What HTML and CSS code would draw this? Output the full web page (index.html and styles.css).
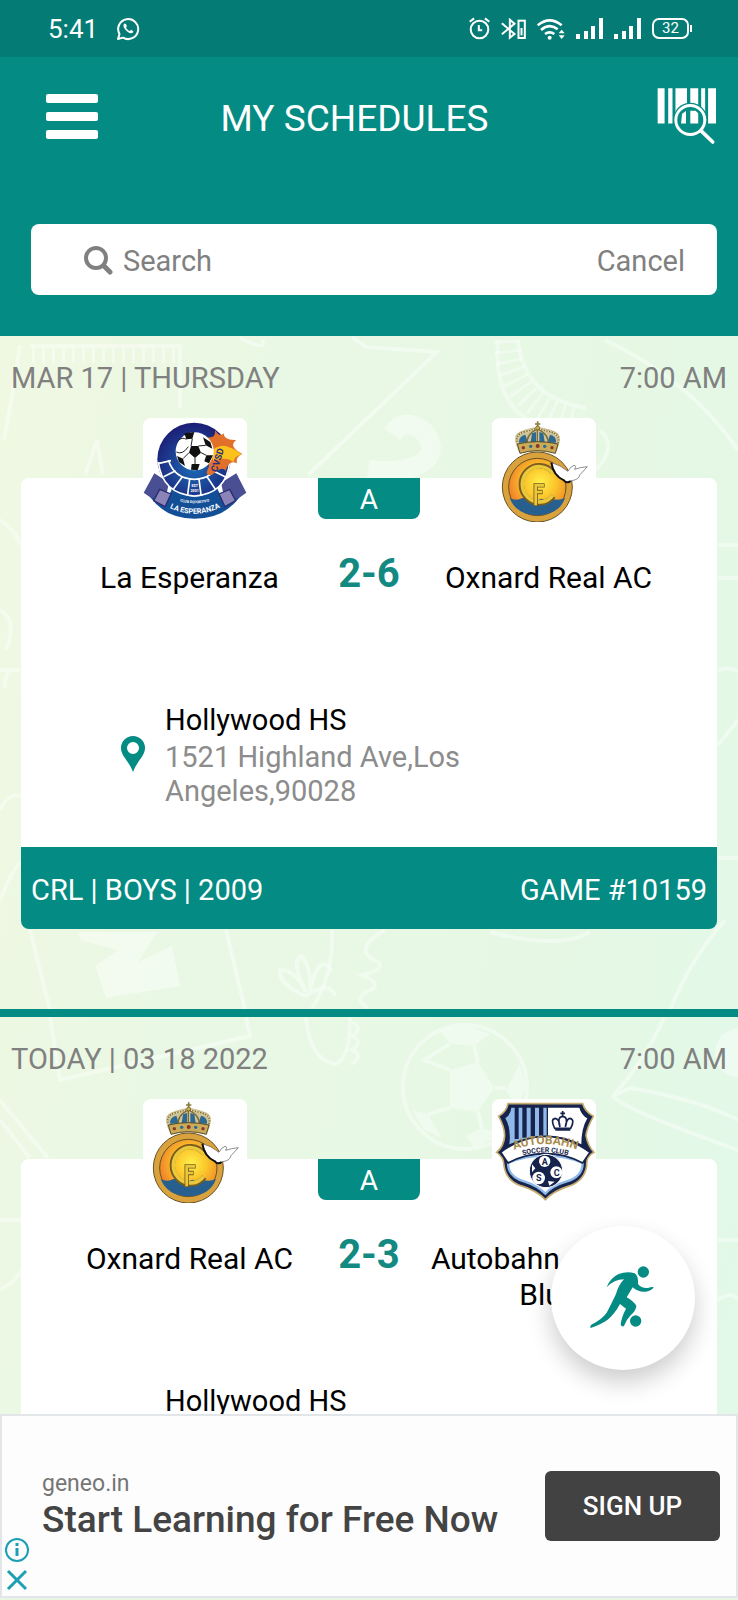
FILE: index.html
```html
<!DOCTYPE html>
<html lang="en">
<head>
  <meta charset="UTF-8" />
  <meta name="viewport" content="width=device-width, initial-scale=1.0"/>
  <title>My Schedules</title>
  <link rel="stylesheet" href="styles.css">
</head>
<body>

  <!-- shared crest -->
  <svg width="0" height="0" class="sprite" aria-hidden="true">
    <defs>
      <radialGradient id="sun" cx="0.55" cy="0.42" r="0.6">
        <stop offset="0" stop-color="#fff04a"/>
        <stop offset="0.45" stop-color="#fbc62b"/>
        <stop offset="1" stop-color="#ee7a28"/>
      </radialGradient>
      <radialGradient id="navy" cx="0.5" cy="0.6" r="0.6">
        <stop offset="0" stop-color="#1c6cb8"/>
        <stop offset="1" stop-color="#1c1c74"/>
      </radialGradient>
      <symbol id="oxnard" viewBox="36 24 312 312">
        <path d="M116 124 Q96 84 112 70 Q130 56 172 50 Q216 56 234 70 Q248 84 230 124 Z" fill="#cfc39a"/>
        <path d="M117 98 Q116 78 136 74 L144 98 Z M152 96 L156 70 L168 66 V96 Z M178 96 V66 L190 70 L194 96 Z M202 98 L210 74 Q230 78 228 98 Z" fill="#2c6a94"/>
        <path d="M112 100 Q104 74 130 66 Q154 62 172 54 Q192 62 214 66 Q242 74 234 100 M142 104 Q136 76 172 56 M204 104 Q210 76 172 56 M172 54 V104" fill="none" stroke="#7d6b33" stroke-width="4"/>
        <path d="M112 100 Q104 74 130 66 Q154 62 172 54 Q192 62 214 66 Q242 74 234 100" fill="none" stroke="#e8dcae" stroke-width="5" stroke-dasharray="4 4"/>
        <path d="M112 102 Q172 88 234 102 L226 130 Q172 114 120 130 Z" fill="#c9ab58" stroke="#5b4c28" stroke-width="3"/>
        <circle cx="130" cy="113" r="5" fill="#8d3426"/><circle cx="152" cy="109" r="5" fill="#2c6a94"/><circle cx="173" cy="108" r="6" fill="#8d3426"/><circle cx="194" cy="109" r="5" fill="#2c6a94"/><circle cx="216" cy="113" r="5" fill="#8d3426"/>
        <path d="M173 34 V56 M165 42 H181" stroke="#8a7a3a" stroke-width="5"/>
        <circle cx="173" cy="54" r="6" fill="#d3b045" stroke="#5b4c28" stroke-width="2"/>
        <circle cx="172" cy="231" r="105" fill="#d9a23c" stroke="#6a5224" stroke-width="3"/>
        <circle cx="172" cy="231" r="86" fill="url(#sun)" stroke="#6a5224" stroke-width="3"/>
        <path d="M89 264 Q104 272 118 268 Q134 258 150 270 Q168 276 184 266 Q202 272 220 268 Q238 272 255 264 Q238 314 172 316 Q108 314 89 264 Z" fill="#27608f"/>
        <path d="M220 188 A54 56 0 1 0 220 258" fill="none" stroke="#7a5c20" stroke-width="16"/>
        <path d="M218 190 A51 53 0 1 0 218 256" fill="none" stroke="#eac83c" stroke-width="11"/>
        <path d="M167 288 V226 H194 M167 246 H188" fill="none" stroke="#7a5c20" stroke-width="13"/>
        <path d="M167 286 V226 H192 M167 246 H186" fill="none" stroke="#eac83c" stroke-width="8"/>
        <path d="M214 158 Q222 196 252 212 Q262 222 274 212 Q296 210 300 194 L322 170 Q300 172 284 178 Q290 166 282 166 Q270 170 264 184 Q240 164 214 158 Z" fill="#fff" stroke="#555" stroke-width="2"/>
        <path d="M214 158 Q220 198 252 211 Q260 222 272 213" fill="none" stroke="#111" stroke-width="6"/>
      </symbol>
    </defs>
  </svg>

  <div class="app">

    <div class="status">
      <div class="status-group">
        <span>5:41</span>
        <svg viewBox="0 0 24 24" width="24" height="24" fill="none" stroke="#fff" stroke-width="2">
          <path d="M2 22 L3.500 17 A10 10 0 1 1 7 20.600 Z" stroke-linejoin="round"/>
          <path d="M8.500 6.500 C7 7.500 7 9.500 9 12.200 C11 15 14 16.800 16 16 C17.500 15.300 17.500 14.500 17 14 L15 12.800 L13.800 14 C12 13.300 10.500 11.800 10 10.400 L10.900 9.300 L10 7 Z" fill="#fff" stroke="none"/>
        </svg>
      </div>
      <div class="status-group status-icons">
        <svg viewBox="80 54 62 68" width="21" height="23" fill="none" stroke="#fff" stroke-width="6">
          <circle cx="111" cy="91" r="26"/><path d="M109 78 V93 H119 M82 68 L95 58 M140 68 L127 58"/>
        </svg>
        <svg viewBox="176 54 74 66" width="25" height="22" fill="none" stroke="#fff" stroke-width="6">
          <path d="M178 70 L216 102 L202 113 V59 L216 71 L178 103"/><rect x="228" y="62" width="19" height="52"/><path d="M237 84 V106"/>
        </svg>
        <svg viewBox="290 52 84 66" width="28" height="22" fill="none" stroke="#fff" stroke-width="8">
          <path d="M292 74 Q328 44 364 74 M302 88 Q328 66 352 86 M314 100 Q328 90 342 100"/><circle cx="328" cy="111" r="6" fill="#fff" stroke="none"/>
          <path d="M355 98 L364 87 L373 98 Z M355 104 L364 115 L373 104 Z" fill="#fff" stroke="none"/>
        </svg>
        <svg viewBox="0 0 27 21" width="27" height="21" fill="#fff"><path d="M0 16h4v5H0z M8 13h4v8H8z M15 8h4v13h-4z M23 0h4v21h-4z"/></svg>
        <svg viewBox="0 0 27 21" width="27" height="21" fill="#fff"><path d="M0 16h4v5H0z M8 13h4v8H8z M15 8h4v13h-4z M23 0h4v21h-4z"/></svg>
        <span class="battery">32</span>
      </div>
    </div>

    <header class="header">
      <div class="topbar">
        <button class="menu" aria-label="Menu"><span></span><span></span><span></span></button>
        <h1>MY SCHEDULES</h1>
        <button class="scan" aria-label="Scan barcode">
          <svg viewBox="650 262 182 174" width="60" height="58">
            <path d="M652 265h21v107h-21z M684 265h13v107h-13z M706 265h35v107h-35z M751 265h24v107h-24z M784 265h12v107h-12z M805 265h24v107h-24z" fill="#fff"/>
            <circle cx="751" cy="361" r="52" fill="#048b83"/>
            <path d="M726 342l12-8v38h-15z M751 333h16l8 8v31h-24z" fill="#fff"/>
            <circle cx="751" cy="361" r="44" fill="none" stroke="#fff" stroke-width="9"/>
            <path d="M784 394 L819 428" stroke="#fff" stroke-width="11" stroke-linecap="round"/>
          </svg>
        </button>
      </div>
      <form class="search">
        <label for="search" aria-label="Search">
          <svg viewBox="0 0 29 29" width="29" height="29" fill="none" stroke="#808080">
            <circle cx="12" cy="12" r="10" stroke-width="4"/><path d="M20 20 L26 26" stroke-width="5" stroke-linecap="round"/>
          </svg>
        </label>
        <input type="text" id="search" placeholder="Search">
        <button type="button">Cancel</button>
      </form>
    </header>

    <main class="list">
      <!-- football doodles behind the cards -->
      <svg class="doodles" viewBox="0 336 738 1264" preserveAspectRatio="xMidYMin slice" fill="none" stroke="#fff" stroke-opacity="0.4" stroke-width="4" aria-hidden="true">
        <path d="M30 346 L180 346 V408 M20 345 Q12 400 4 440 M85 475 L97 440 L103 475 M352 337 L366 347 L437 352 L308 475 M240 338 Q268 352 262 340"/>
        <path d="M32 355 H180" stroke-width="16" stroke-dasharray="3 7"/>
        <path d="M507 340 Q508 408 580 422" stroke-width="26" stroke-dasharray="3 7"/>
        <path d="M498 340 Q490 426 575 436 M518 340 Q524 398 586 408 M605 340 Q690 380 738 450 M590 475 Q620 450 600 430"/>
        <path d="M392 434 Q405 416 424 432 Q440 452 420 464 Q400 474 368 470" stroke-width="20"/>
        <path d="M0 520 Q16 530 20 545 M0 610 Q18 620 6 650 M0 670 H20 M8 672 Q2 690 6 685 M0 810 Q8 792 21 796 M0 900 Q12 870 21 862 M718 545 h20 M718 578 h20 M718 670 Q730 666 738 672 M718 745 Q730 730 738 720 M718 858 h20"/>
        <path d="M78 932 H158 L138 962 L172 946 L180 986 L106 998 L95 966 L118 950 L80 940 Z" fill="#fff" fill-opacity="0.4" stroke="none"/>
        <path d="M30 930 L50 1010 M226 930 L245 1010 M332 930 Q334 975 312 1008 M490 932 Q560 950 590 932 M725 920 Q690 960 670 1010"/>
        <path d="M305 996 Q278 984 280 970 Q296 970 306 992 Q290 960 302 956 Q312 970 310 990 Q320 950 332 972 M305 996 Q330 980 335 996 M385 930 Q350 950 378 962 Q386 970 362 975 Q386 985 366 992 Q354 1000 368 1008"/>
        <path d="M50 1017 L60 1080 L250 1036 L246 1017 M306 1018 Q310 1060 335 1064 Q350 1060 350 1017 M352 1064 q12 -8 0 -14 q12 -8 0 -14 q12 -8 0 -14 M664 1018 Q645 1060 613 1096 Q620 1108 738 1150 M613 1096 L630 1088 Q700 1100 738 1120"/>
        <circle cx="740" cy="1053" r="25" fill="#fff" fill-opacity="0.4" stroke="none"/>
        <circle cx="465" cy="1087" r="62"/>
        <path d="M450 1070 L478 1062 L494 1088 L478 1112 L450 1108 Z M440 1030 L466 1026 L490 1034 L474 1046 L450 1044 Z M520 1064 L526 1088 L516 1108 L506 1090 Z M466 1136 L482 1128 L504 1134 L474 1148 Z M412 1110 L428 1114 L442 1138 L424 1130 Z" fill="#fff" fill-opacity="0.4" stroke="none"/>
        <path d="M478 1062 L474 1046 M450 1070 L424 1060 L450 1044 M494 1088 H506 M478 1112 L482 1128 M450 1108 L428 1114"/>
        <path d="M0 1100 L48 1158 M0 1120 L30 1158 M0 1220 H21 M0 1290 Q18 1280 21 1270 M718 1240 H738 M718 1300 Q732 1290 738 1300"/>
      </svg>

      <section class="game">
        <div class="when"><span>MAR 17 | THURSDAY</span><span>7:00 AM</span></div>
        <article class="card">
          <div class="match">
            <div class="team">
              <svg class="crest" viewBox="42 24 312 312" role="img" aria-label="La Esperanza crest">
                <path d="M76 190 L120 218 L104 290 L44 248 Z M322 190 L276 218 L292 290 L352 248 Z" fill="#4a4f94"/>
                <circle cx="197" cy="178" r="147" fill="none"/>
                <path d="M64 262 Q120 280 130 230 Q196 290 264 230 Q276 280 332 262 Q284 326 197 326 Q110 326 64 262 Z" fill="#134f96"/>
                <path d="M92 238 L126 252 L108 290 L74 272 Z M302 238 L270 252 L288 290 L320 272 Z" fill="#8a84b8" stroke="#2c2c70" stroke-width="4"/>
                <circle cx="195" cy="148" r="110" fill="url(#navy)"/>
                <path d="M88 156 Q100 252 196 258 Q292 252 302 156 M118 150 Q136 206 196 208 Q256 206 272 150 M90 160 L126 152 M104 200 L140 182 M134 236 L160 200 M176 254 L182 208 M216 254 L210 208 M258 236 L234 200 M288 200 L252 182" fill="none" stroke="#fff" stroke-width="5"/>
                <path d="M236 82 Q262 84 258 60 Q272 84 284 70 Q284 92 322 90 Q296 108 340 132 Q318 142 324 160 Q300 148 290 182 Q280 166 250 194 Q222 200 240 170 Z" fill="#e0702a"/>
                <path d="M250 120 Q280 100 300 112 Q316 116 338 134 Q316 136 314 156 Q292 138 252 152 Z" fill="#fbc21c"/>
                <text x="252" y="146" class="crest-cup" transform="rotate(-72 268 134)">CVSD</text>
                <circle cx="197" cy="124" r="57" fill="#fff"/>
                <path d="M186 108 L208 108 L216 128 L198 144 L180 128 Z M166 70 L196 66 L190 86 L172 88 Z M222 82 L244 96 L250 116 L230 106 Z M232 136 L252 136 L240 160 L226 154 Z M188 162 L212 162 L206 181 L186 179 Z M144 138 L162 146 L168 168 L150 156 Z" fill="#111"/>
                <path d="M190 86 L186 108 M208 108 L230 106 M216 128 L232 136 M198 144 V162 M180 128 L162 146 M146 92 Q160 80 172 88 M142 126 Q160 136 178 110" fill="none" stroke="#222" stroke-width="3"/>
                <text x="197" y="232" class="crest-est">EST</text>
                <text x="197" y="246" class="crest-est">2001</text>
                <path id="arc1" d="M140 270 Q197 290 254 270" fill="none"/>
                <path id="arc2" d="M100 282 Q197 342 296 280" fill="none"/>
                <text class="crest-small"><textPath href="#arc1" startOffset="50%">CLUB DEPORTIVO</textPath></text>
                <text class="crest-name"><textPath href="#arc2" startOffset="50%">LA ESPERANZA</textPath></text>
              </svg>
              <h2>La Esperanza</h2>
            </div>
            <div class="result"><span class="group">A</span><strong>2-6</strong></div>
            <div class="team">
              <svg class="crest" role="img" aria-label="Oxnard Real AC crest"><use href="#oxnard"/></svg>
              <h2>Oxnard Real AC</h2>
            </div>
          </div>
          <div class="place">
            <svg viewBox="0 0 24 36" width="24" height="36"><path d="M12 0 A12 12 0 0 0 0 12 C0 20 8 25 12 36 C16 25 24 20 24 12 A12 12 0 0 0 12 0 Z M12 6 A6 6 0 1 1 12 18 A6 6 0 1 1 12 6 Z" fill="#048b83" fill-rule="evenodd"/></svg>
            <div>
              <h3>Hollywood HS</h3>
              <p>1521 Highland Ave,Los Angeles,90028</p>
            </div>
          </div>
          <footer><span>CRL | BOYS | 2009</span><span>GAME #10159</span></footer>
        </article>
      </section>

      <section class="game">
        <div class="when"><span>TODAY | 03 18 2022</span><span>7:00 AM</span></div>
        <article class="card">
          <div class="match">
            <div class="team">
              <svg class="crest" role="img" aria-label="Oxnard Real AC crest"><use href="#oxnard"/></svg>
              <h2>Oxnard Real AC</h2>
            </div>
            <div class="result"><span class="group">A</span><strong>2-3</strong></div>
            <div class="team">
              <svg class="crest" viewBox="36 24 312 312" role="img" aria-label="Autobahn crest">
                <path d="M84 38 H308 Q314 60 340 76 Q320 112 318 134 Q324 166 342 184 Q318 196 320 224 Q314 268 270 284 Q220 300 196 326 Q170 298 122 284 Q78 268 72 224 Q72 198 50 184 Q72 166 74 134 Q74 108 56 76 Q80 62 84 38 Z" fill="#16234c" stroke="#c5ac6e" stroke-width="5"/>
                <path d="M94 50 H200 V134 Q140 136 88 160 Q94 112 76 82 Q92 72 94 50 Z" fill="#8fb9e8"/>
                <path d="M104 48h12v96h-12z M127 48h13v92h-13z M152 48h13v88h-13z M177 48h13v86h-13z" fill="#16234c"/>
                <path d="M204 50 H298 Q304 72 322 82 Q304 112 304 160 Q260 136 204 134 Z" fill="#fff"/>
                <path d="M224 112 Q210 84 226 82 Q238 84 240 108 Q230 78 248 76 Q266 78 256 108 Q260 82 270 82 Q286 86 272 112 Z M248 76 V60 M241 67 H255 M226 117 H271" fill="none" stroke="#16234c" stroke-width="5"/>
                <path d="M84 216 Q136 194 196 194 Q256 194 308 216 Q308 258 258 272 Q218 284 196 308 Q172 284 134 272 Q84 258 84 216 Z" fill="#fff" stroke="#8fb9e8" stroke-width="7"/>
                <path d="M62 184 Q126 136 196 136 Q266 136 330 184 L308 216 Q256 188 196 188 Q136 188 84 216 Z" fill="#fff" stroke="#16234c" stroke-width="5"/>
                <path id="arc3" d="M78 186 Q196 132 314 186" fill="none"/>
                <path id="arc4" d="M90 206 Q196 162 302 206" fill="none"/>
                <text class="crest-auto"><textPath href="#arc3" startOffset="50%">AUTOBAHN</textPath></text>
                <text class="crest-club"><textPath href="#arc4" startOffset="50%">SOCCER CLUB</textPath></text>
                <circle cx="198" cy="240" r="50" fill="#16234c" stroke="#fff" stroke-width="3"/>
                <circle cx="194" cy="211" r="17" fill="#fff"/><circle cx="176" cy="261" r="19" fill="#fff"/><circle cx="229" cy="244" r="18" fill="#fff"/>
                <path d="M156 220 L166 232 L156 244 Z M204 270 L224 272 L208 284 Z" fill="#fff"/>
                <text x="194" y="221" class="crest-letter">A</text><text x="176" y="271" class="crest-letter">S</text><text x="230" y="254" class="crest-letter">C</text>
              </svg>
              <h2>Autobahn SC G09 Blue</h2>
            </div>
          </div>
          <div class="place">
            <svg viewBox="0 0 24 36" width="24" height="36"><path d="M12 0 A12 12 0 0 0 0 12 C0 20 8 25 12 36 C16 25 24 20 24 12 A12 12 0 0 0 12 0 Z M12 6 A6 6 0 1 1 12 18 A6 6 0 1 1 12 6 Z" fill="#048b83" fill-rule="evenodd"/></svg>
            <div>
              <h3>Hollywood HS</h3>
              <p>1521 Highland Ave,Los Angeles,90028</p>
            </div>
          </div>
        </article>
      </section>

      <button class="fab" aria-label="Play">
        <svg viewBox="63 48 432 432" width="144" height="144" fill="#048b83">
          <circle cx="340" cy="186" r="17"/>
          <circle cx="317" cy="333" r="17"/>
          <path d="M230 232 Q240 204 266 192 Q292 182 314 190 Q326 198 324 222 Q334 236 354 234 Q366 230 371 232 Q366 242 348 245 Q326 248 308 232 L290 262 Q312 274 319 288 Q318 302 302 316 Q288 330 282 348 Q276 352 272 344 Q274 322 288 296 L270 282 Q254 312 232 330 Q212 344 182 354 Q178 350 184 344 Q216 328 230 308 Q244 282 258 252 Q266 224 282 208 Q252 208 230 232 Z"/>
        </svg>
      </button>
    </main>

    <aside class="ad">
      <div class="ad-marks">
        <button aria-label="Ad info">
          <svg viewBox="0 0 26 26" width="26" height="26" fill="none" stroke="#1c9fb5" stroke-width="2"><circle cx="13" cy="13" r="11"/><path d="M13 11 V19 M13 6 V9" stroke-width="3"/></svg>
        </button>
        <button aria-label="Close ad">
          <svg viewBox="0 0 26 26" width="26" height="26" fill="none" stroke="#1c9fb5" stroke-width="3"><path d="M4 4 L22 22 M22 4 L4 22"/></svg>
        </button>
      </div>
      <div class="ad-text">
        <small>geneo.in</small>
        <p>Start Learning for Free Now</p>
      </div>
      <a href="#" class="ad-button">SIGN UP</a>
    </aside>

  </div>

</body>
</html>
```
FILE: styles.css
```css
* {
  box-sizing: border-box;
  font-family: Roboto, Arial, sans-serif;
}

body {
  margin: 0;
  background-color: #e8f7e3;
}

h1, h2, h3, p {
  margin: 0;
  font-weight: normal;
}

button {
  padding: 0;
  border: none;
  background: none;
  cursor: pointer;
}

svg {
  display: block;
  flex-shrink: 0;
}

.sprite {
  position: absolute;
}

.app {
  height: 100vh;
  display: flex;
  flex-direction: column;
}

/* status bar */
.status {
  display: flex;
  justify-content: space-between;
  align-items: center;
  height: 57px;
  padding: 0 46px 0 48px;
  background: #047c75;
  color: #fff;
  font-size: 26px;
}

.status-group {
  display: flex;
  align-items: center;
  gap: 18px;
}

.status-icons {
  gap: 11px;
}

.battery {
  position: relative;
  width: 37px;
  height: 21px;
  margin-right: 3px;
  border: 2px solid #fff;
  border-radius: 7px;
  font-size: 15px;
  line-height: 17px;
  text-align: center;
}

.battery::after {
  content: "";
  position: absolute;
  right: -5px;
  top: 5px;
  width: 2px;
  height: 7px;
  background: #fff;
}

/* header */
.header {
  padding-bottom: 41px;
  background: #048b83;
}

.topbar {
  display: flex;
  align-items: center;
  height: 118px;
  margin-bottom: 49px;
  padding: 0 21px 0 46px;
}

.menu {
  display: grid;
  gap: 9px;
  width: 52px;
}

.menu span {
  height: 9px;
  border-radius: 2px;
  background: #fff;
}

h1 {
  flex: 1;
  padding: 4px 46px 0 0;
  color: #fff;
  font-size: 37px;
  text-align: center;
}

.search {
  display: flex;
  align-items: center;
  height: 71px;
  margin: 0 21px 0 31px;
  padding: 2px 32px 0 53px;
  border-radius: 8px;
  background: #fff;
}

.search input {
  flex: 1;
  min-width: 0;
  padding: 0 10px;
  border: none;
  outline: none;
  font-size: 29px;
}

.search input::placeholder {
  color: #808080;
}

.search button {
  color: #808080;
  font-size: 29px;
}

/* schedule list */
.list {
  position: relative;
  flex: 1;
  min-height: 0;
  overflow: hidden;
  background: linear-gradient(100deg, #f0f8e2 0%, #e9f8e4 30%, #e6f8e4 70%, #e2f8e8 100%);
}

.doodles {
  position: absolute;
  top: 0;
  left: 0;
  width: 100%;
}

.game {
  position: relative;
  padding-bottom: 80px;
  border-bottom: 8px solid #048b83;
}

.when {
  display: flex;
  justify-content: space-between;
  padding: 24px 11px 0;
  color: #808080;
  font-size: 29px;
  line-height: 36px;
}

.card {
  margin: 82px 21px 0;
  border-radius: 8px;
  background: #fff;
}

.match {
  display: grid;
  grid-template-columns: 1fr 102px 1fr;
  min-height: 216px;
  padding: 0 40px;
}

.team {
  display: flex;
  flex-direction: column;
  align-items: center;
  margin-top: -60px;
}

.crest {
  width: 104px;
  height: 104px;
  border-radius: 8px;
  background: #fff;
  overflow: visible;
}

/* crests sit slightly closer to the middle than the names */
.team:first-child .crest {
  margin-left: 10px;
}

.team:last-child .crest {
  margin-right: 10px;
}

h2 {
  margin-top: 38px;
  color: #000;
  font-size: 30px;
  line-height: 36px;
  text-align: center;
}

.result {
  display: flex;
  flex-direction: column;
  align-items: center;
}

.group {
  align-self: stretch;
  height: 41px;
  border-radius: 0 0 8px 8px;
  background: #048b83;
  color: #fff;
  font-size: 28px;
  line-height: 44px;
  text-align: center;
}

.result strong {
  margin-top: 31px;
  color: #128a82;
  font-size: 40px;
  line-height: 48px;
}

.place {
  display: flex;
  align-items: center;
  gap: 20px;
  padding: 6px 200px 39px 100px;
}

h3 {
  color: #000;
  font-size: 29px;
  line-height: 40px;
}

.place p {
  color: #8c8c8c;
  font-size: 29px;
  line-height: 34px;
}

.card footer {
  display: flex;
  justify-content: space-between;
  padding: 4px 10px 0;
  border-radius: 0 0 8px 8px;
  background: #048b83;
  color: #fff;
  font-size: 29px;
  line-height: 78px;
}

.fab {
  position: absolute;
  right: 43px;
  bottom: 44px;
  width: 144px;
  height: 144px;
  border-radius: 50%;
  background: #fff;
  box-shadow: 0 12px 24px rgba(0, 0, 0, 0.2);
}

/* banner */
.ad {
  position: relative;
  display: flex;
  align-items: center;
  justify-content: space-between;
  height: 184px;
  margin-bottom: 2px;
  padding: 0 16px 0 40px;
  border: 2px solid #e2e6e8;
  background: #fdfdfd;
}

.ad-text small {
  color: #757575;
  font-size: 23px;
  line-height: 28px;
}

.ad-text p {
  color: #444;
  font-size: 37px;
  font-weight: 500;
  line-height: 44px;
}

.ad-button {
  width: 175px;
  border-radius: 6px;
  background: #424242;
  color: #fff;
  font-size: 26px;
  font-weight: 500;
  line-height: 70px;
  text-align: center;
  text-decoration: none;
}

.ad-marks {
  position: absolute;
  left: 2px;
  bottom: 3px;
  display: grid;
  gap: 4px;
}

/* lettering on the crests */
.crest text {
  fill: #fff;
  font-weight: bold;
  text-anchor: middle;
}

.crest .crest-name {
  font-size: 22px;
}

.crest .crest-small {
  font-size: 11px;
}

.crest .crest-est {
  font-size: 11px;
}

.crest .crest-cup {
  fill: #2a2a80;
  font-size: 28px;
}

.crest .crest-auto {
  fill: #a88c4c;
  font-size: 36px;
}

.crest .crest-club {
  fill: #16234c;
  font-size: 21px;
}

.crest .crest-letter {
  fill: #16234c;
  font-size: 27px;
}
```
